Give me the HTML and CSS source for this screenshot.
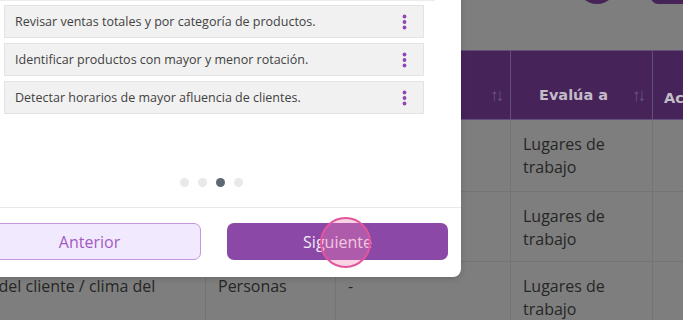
FILE: index.html
```html
<!DOCTYPE html>
<html lang="es">
<head>
  <meta charset="UTF-8" />
  <meta name="viewport" content="width=device-width, initial-scale=1.0" />
  <title>Indicadores</title>
  <link rel="stylesheet" href="styles.css">
</head>
<body>
  <div class="page">
    <div class="toolbar">
      <span class="round-btn"></span>
      <span class="pill-btn"></span>
    </div>

    <table class="grid">
      <colgroup>
        <col class="c-desc">
        <col class="c-type">
        <col class="c-unit">
        <col class="c-eval">
        <col class="c-act">
      </colgroup>
      <thead>
        <tr>
          <th><div class="th-in">Descripción <span class="sort">↑↓</span></div></th>
          <th><div class="th-in">Tipo <span class="sort">↑↓</span></div></th>
          <th><div class="th-in">Unidad <span class="sort">↑↓</span></div></th>
          <th><div class="th-in">Evalúa a <span class="sort">↑↓</span></div></th>
          <th><div class="th-in">Acciones</div></th>
        </tr>
      </thead>
      <tbody>
        <tr>
          <td>Porcentaje de ventas cumplidas frente a la meta</td>
          <td>Procesos</td>
          <td>%</td>
          <td>Lugares de trabajo</td>
          <td></td>
        </tr>
        <tr class="short">
          <td>Rotación de inventario por categoría</td>
          <td>Procesos</td>
          <td>-</td>
          <td>Lugares de trabajo</td>
          <td></td>
        </tr>
        <tr>
          <td>Evaluación de la atención del cliente / clima del<br>entorno laboral</td>
          <td>Personas</td>
          <td>-</td>
          <td>Lugares de trabajo</td>
          <td></td>
        </tr>
      </tbody>
    </table>
  </div>

  <div class="modal">
    <div class="modal-head"></div>
    <div class="modal-body">
      <ul class="steps">
        <li>Revisar ventas totales y por categoría de productos. <svg class="kebab" width="5" height="16" viewBox="0 0 5 16"><circle cx="2.5" cy="2.5" r="1.9"/><circle cx="2.5" cy="8" r="1.9"/><circle cx="2.5" cy="13.5" r="1.9"/></svg></li>
        <li>Identificar productos con mayor y menor rotación. <svg class="kebab" width="5" height="16" viewBox="0 0 5 16"><circle cx="2.5" cy="2.5" r="1.9"/><circle cx="2.5" cy="8" r="1.9"/><circle cx="2.5" cy="13.5" r="1.9"/></svg></li>
        <li>Detectar horarios de mayor afluencia de clientes. <svg class="kebab" width="5" height="16" viewBox="0 0 5 16"><circle cx="2.5" cy="2.5" r="1.9"/><circle cx="2.5" cy="8" r="1.9"/><circle cx="2.5" cy="13.5" r="1.9"/></svg></li>
      </ul>
      <div class="dots">
        <span></span><span></span><span class="on"></span><span></span>
      </div>
    </div>
    <div class="modal-foot">
      <button class="btn-ghost">Anterior</button>
      <button class="btn-main">Siguiente</button>
    </div>
  </div>

  <span class="tap"></span>
</body>
</html>
```

FILE: styles.css
```css
body, html {
  margin: 0;
  padding: 0;
  font-family: 'Open Sans', 'Noto Sans', sans-serif;
  background: #7e7e7e;
  overflow: hidden;
}

.page {
  margin-left: -207px;
}

.toolbar {
  display: flex;
  gap: 34px;
  padding-left: 784px;
  margin-top: -36px;
  height: 40px;
}

.round-btn {
  flex-shrink: 0;
  width: 40px;
  height: 40px;
  border-radius: 50%;
  background: #46245a;
}

.pill-btn {
  flex-shrink: 0;
  width: 120px;
  height: 40px;
  border-radius: 7px;
  background: #46245a;
}

.grid {
  margin-top: 46px;
  width: 1007px;
  border-collapse: collapse;
  table-layout: fixed;
  font-size: 16px;
}

.c-desc { width: 412px; }
.c-type { width: 130px; }
.c-unit { width: 175px; }
.c-eval { width: 142px; }
.c-act { width: 148px; }

.grid th {
  height: 55px;
  padding: 0 9px 13px 28px;
  background: #46245a;
  border: 1px solid #62507a;
  color: #c4bbc9;
  font-family: 'DejaVu Sans', sans-serif;
  font-size: 14.5px;
  font-weight: 700;
  vertical-align: bottom;
  text-align: left;
}

.grid th:last-child {
  padding-left: 11px;
}

.th-in {
  display: flex;
  justify-content: space-between;
  align-items: center;
  white-space: nowrap;
}

.sort {
  color: #6c5a80;
  font-family: 'Open Sans', sans-serif;
  font-weight: 400;
  font-size: 17px;
  letter-spacing: -3px;
}

.grid td {
  height: 58px;
  padding: 13px 12px 0;
  border: 1px solid #747474;
  color: #262626;
  line-height: 23px;
  vertical-align: top;
}

.grid tr.short td {
  height: 56px;
}

/* modal */
.modal {
  position: absolute;
  left: -35px;
  top: -20px;
  width: 496px;
  background: #fff;
  border-radius: 8px;
  box-shadow: 0 2px 6px rgba(0, 0, 0, 0.15);
}

.modal-head {
  height: 20px;
  margin-right: 26px;
  border-bottom: 1px solid #ececec;
}

.modal-body {
  padding: 4px 37px 20px 39px;
}

.steps {
  list-style: none;
  margin: 0;
  padding: 0;
}

.steps li {
  display: flex;
  justify-content: space-between;
  align-items: center;
  box-sizing: border-box;
  height: 33px;
  margin-bottom: 5px;
  padding: 0 16px 0 10px;
  background: #f1f1f1;
  border: 1px solid #e3e3e3;
  font-size: 12.5px;
  color: #424242;
}

.kebab {
  fill: #9146b6;
}

.dots {
  display: flex;
  justify-content: center;
  gap: 9px;
  margin-top: 64px;
  padding-right: 6px;
}

.dots span {
  width: 9px;
  height: 9px;
  border-radius: 50%;
  background: #e9e9e9;
}

.dots span.on {
  background: #5e6875;
}

.modal-foot {
  display: flex;
  gap: 26px;
  padding: 15px 13px 17px;
  border-top: 1px solid #e8e8e8;
}

.modal-foot button {
  flex: 1;
  height: 37px;
  border-radius: 7px;
  font-family: inherit;
  font-size: 16px;
  font-weight: 500;
  cursor: pointer;
}

.btn-ghost {
  background: #f1e9fd;
  border: 1.5px solid #c497de;
  color: #a35bc4;
}

.btn-main {
  background: #8b48a6;
  border: none;
  color: #f3eaf7;
}

.tap {
  position: absolute;
  left: 320px;
  top: 217px;
  width: 47px;
  height: 47px;
  border-radius: 50%;
  border: 2px solid #e3559c;
  background: rgba(241, 130, 180, 0.35);
}
```
